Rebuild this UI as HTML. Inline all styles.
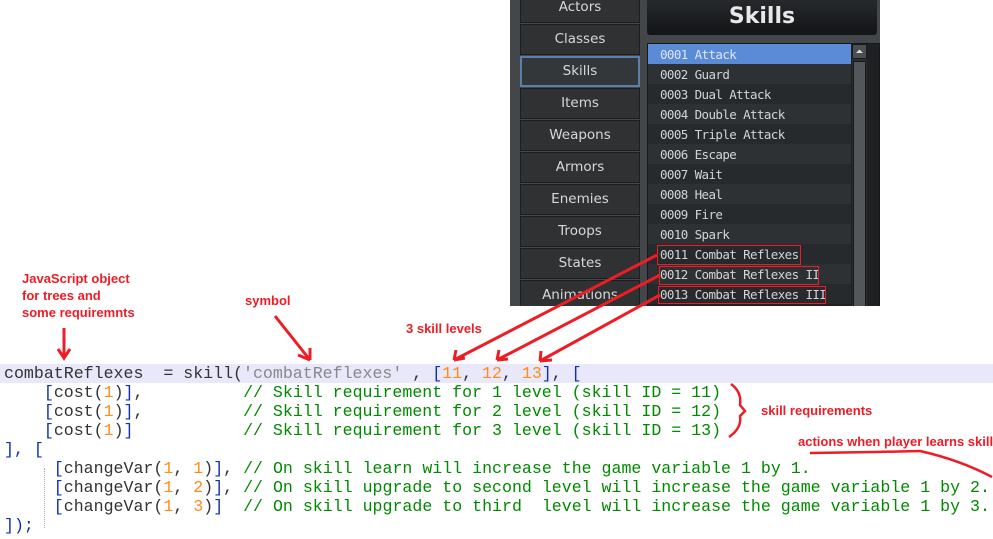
<!DOCTYPE html>
<html><head><meta charset="utf-8"><style>
*{margin:0;padding:0;box-sizing:border-box}
body{width:993px;height:539px;background:#fff;position:relative;overflow:hidden;font-family:"Liberation Sans","DejaVu Sans",sans-serif}
#panel{position:absolute;left:510px;top:0;width:370px;height:306px;background:#43474a;overflow:hidden}
.btn{position:absolute;left:10px;width:120px;height:31px;background:#2f3133;border:1px solid #1c1d1f;color:#d8d8d8;font:13.5px "DejaVu Sans",sans-serif;text-align:center;line-height:29px}
.btn.sel{border:2px solid #5a7fa8;background:#34373a;line-height:27px}
#title{position:absolute;left:137px;top:-6px;width:230px;height:41px;background:linear-gradient(#2a2d30,#121416);border-radius:3px;color:#e8e8e8;font:bold 22px "DejaVu Sans",sans-serif;text-align:center;line-height:46px}
#list{position:absolute;left:137px;top:43px;width:233px;height:270px;background:#1e2022;border:1px solid #15171a}
.row{height:20px;color:#d4d4d4;font:12.5px "DejaVu Sans Mono",monospace;letter-spacing:-0.6px;line-height:21px;padding-left:12px;width:203px;white-space:nowrap}
.row:nth-child(odd){background:#262a2c}.row:nth-child(even){background:#2d3133}
.row.s{background:#5b8ad6;color:#dde6f5}
#sb{position:absolute;left:204px;top:0;width:15px;height:270px;background:#2b2e30}
#sbu{position:absolute;left:0;top:0;width:15px;height:15px;background:#4b4f52;border:1px solid #1a1c1e}
#sbt{position:absolute;left:1px;top:17px;width:13px;height:260px;background:#53575a;border:1px solid #15171a}
#code{position:absolute;left:4px;top:364px;font:16.6px/19px "Liberation Mono",monospace;white-space:pre;color:#333}
#hl{position:absolute;left:0;top:364px;width:993px;height:19px;background:#e8e8fa}
.b{color:#1030b0}.n{color:#ff8c1a}.c{color:#008a00}.st{color:#888}.k{color:#333}
.lab{position:absolute;color:#ee1c25;font:bold 13px "Liberation Sans",sans-serif;line-height:17px;white-space:nowrap}
</style></head><body>
<div id="panel">
<div class="btn" style="top:-8px">Actors</div>
<div class="btn" style="top:24px">Classes</div>
<div class="btn sel" style="top:56px">Skills</div>
<div class="btn" style="top:88px">Items</div>
<div class="btn" style="top:120px">Weapons</div>
<div class="btn" style="top:152px">Armors</div>
<div class="btn" style="top:184px">Enemies</div>
<div class="btn" style="top:216px">Troops</div>
<div class="btn" style="top:248px">States</div>
<div class="btn" style="top:280px">Animations</div>
<div id="title">Skills</div>
<div id="list">
<div class="row s">0001 Attack</div>
<div class="row">0002 Guard</div>
<div class="row">0003 Dual Attack</div>
<div class="row">0004 Double Attack</div>
<div class="row">0005 Triple Attack</div>
<div class="row">0006 Escape</div>
<div class="row">0007 Wait</div>
<div class="row">0008 Heal</div>
<div class="row">0009 Fire</div>
<div class="row">0010 Spark</div>
<div class="row">0011 Combat Reflexes</div>
<div class="row">0012 Combat Reflexes II</div>
<div class="row">0013 Combat Reflexes III</div>
<div id="sb"><div id="sbu"><svg width="13" height="13" style="position:absolute;left:0;top:0"><path d="M3 8 L6.5 4.5 L10 8Z" fill="#ddd"/></svg></div><div id="sbt"></div></div>
</div>
</div>
<div id="hl"></div>
<div id="code"><span class="k">combatReflexes  = skill(</span><span class="st">'combatReflexes'</span> , <span class="b">[</span><span class="n">11</span>, <span class="n">12</span>, <span class="n">13</span><span class="b">]</span>, <span class="b">[</span>
    <span class="b">[</span>cost(<span class="n">1</span>)<span class="b">]</span>,          <span class="c">// Skill requirement for 1 level (skill ID = 11)</span>
    <span class="b">[</span>cost(<span class="n">1</span>)<span class="b">]</span>,          <span class="c">// Skill requirement for 2 level (skill ID = 12)</span>
    <span class="b">[</span>cost(<span class="n">1</span>)<span class="b">]</span>           <span class="c">// Skill requirement for 3 level (skill ID = 13)</span>
<span class="b">], [</span>
     <span class="b">[</span>changeVar(<span class="n">1</span>, <span class="n">1</span>)<span class="b">]</span>, <span class="c">// On skill learn will increase the game variable 1 by 1.</span>
     <span class="b">[</span>changeVar(<span class="n">1</span>, <span class="n">2</span>)<span class="b">]</span>, <span class="c">// On skill upgrade to second level will increase the game variable 1 by 2.</span>
     <span class="b">[</span>changeVar(<span class="n">1</span>, <span class="n">3</span>)<span class="b">]</span>  <span class="c">// On skill upgrade to third  level will increase the game variable 1 by 3.</span>
<span class="b">]);</span></div>
<div style="position:absolute;left:44px;top:468px;width:0;height:60px;border-left:1px dotted #aaa"></div>
<div class="lab" style="left:22px;top:270px">JavaScript object<br>for trees and<br>some requiremnts</div>
<div class="lab" style="left:245px;top:292px">symbol</div>
<div class="lab" style="left:406px;top:320px">3 skill levels</div>
<div class="lab" style="left:761px;top:402px">skill requirements</div>
<div class="lab" style="left:798px;top:433px">actions when player learns skill</div>
<svg width="993" height="539" style="position:absolute;left:0;top:0" fill="none" stroke="#ee1c25" stroke-width="2">
<rect x="657.5" y="245.5" width="143" height="19" stroke-width="1"/>
<rect x="659.5" y="266.5" width="159" height="18" stroke-width="1"/>
<rect x="658.5" y="286.5" width="167" height="17" stroke-width="1"/>
<path d="M657 255 L454 360 M454 360 L456 350 M454 360 L465 358" stroke-width="3"/>
<path d="M660 275 L497 360 M497 360 L499 350 M497 360 L508 359" stroke-width="3"/>
<path d="M660 295 L540 361 M540 361 L541 351 M540 361 L552 360" stroke-width="3"/>
<path d="M275 316 L310 360 M310 360 L310 348 M310 360 L298 355" stroke-width="3"/>
<path d="M64 328 L64 357 M58 349 L64 358 L70 349" stroke-width="3"/>
<path d="M731 384 Q742 392 740 405 L745 411 L740 416 Q742 428 729 437" stroke-width="2.5"/>
<path d="M810 453 L875 452 L920 451 Q960 460 992 477" stroke-width="2.5"/>
</svg>
</body></html>
